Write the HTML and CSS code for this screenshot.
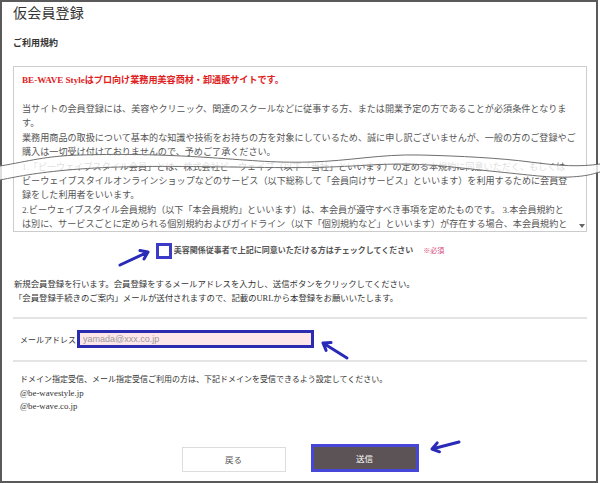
FILE: index.html
```html
<!DOCTYPE html>
<html lang="ja">
<head>
  <meta charset="UTF-8">
  <meta name="viewport" content="width=device-width, initial-scale=1.0">
  <title>仮会員登録</title>
  <link rel="stylesheet" href="styles.css">
</head>
<body>
  <div class="frame">
    <h1 class="title">仮会員登録</h1>
    <h2 class="subtitle">ご利用規約</h2>

    <div class="terms">
      <div class="terms-text">
        <p class="lead">BE-WAVE Styleはプロ向け業務用美容商材・卸通販サイトです。</p>
        <p>当サイトの会員登録には、美容やクリニック、関連のスクールなどに従事する方、または開業予定の方であることが必須条件となりま<br>す。<br>
        業務用商品の取扱について基本的な知識や技術をお持ちの方を対象にしているため、誠に申し訳ございませんが、一般の方のご登録やご<br>購入は一切受け付けておりませんので、予めご了承ください。<br>
        1.「ビーウェイブスタイル会員」とは、株式会社ビーウェイブ（以下「当社」といいます）の定める本規約に同意いただく、もしくは<br>
        ビーウェイブスタイルオンラインショップなどのサービス（以下総称して「会員向けサービス」といいます）を利用するために会員登<br>録をした利用者をいいます。<br>
        2.ビーウェイブスタイル会員規約（以下「本会員規約」といいます）は、本会員が遵守すべき事項を定めたものです。 3.本会員規約と<br>は別に、サービスごとに定められる個別規約およびガイドライン（以下「個別規約など」といいます）が存在する場合、本会員規約と</p>
      </div>
      <div class="scrollbar"><span class="scroll-down"></span></div>
    </div>

    <label class="agree">
      <input type="checkbox" class="agree-box">
      <span>美容関係従事者で上記に同意いただける方はチェックしてください</span>
      <span class="required">※必須</span>
    </label>

    <p class="notice">新規会員登録を行います。会員登録をするメールアドレスを入力し、送信ボタンをクリックしてください。<br>「会員登録手続きのご案内」メールが送付されますので、記載のURLから本登録をお願いいたします。</p>

    <div class="mail-row">
      <label for="mail" class="mail-label">メールアドレス</label>
      <input type="text" id="mail" class="mail-input" placeholder="yamada@xxx.co.jp">
    </div>

    <p class="domain">ドメイン指定受信、メール指定受信ご利用の方は、下記ドメインを受信できるよう設定してください。<br><span class="addr">@be-wavestyle.jp</span><br><span class="addr">@be-wave.co.jp</span></p>

    <div class="actions">
      <button class="btn btn-back">戻る</button>
      <button class="btn btn-send">送信</button>
    </div>
  </div>

  <!-- omitted part of the terms -->
  <svg class="wave" viewBox="0 140 600 50" width="600" height="50">
    <defs>
      <clipPath id="above-low">
        <path d="M0,180 C20,176 40,172 80,169 S160,166 230,167 S320,168 370,165 S450,167 490,171 S550,178 570,177 S595,173 600,172 L600,140 L0,140 Z"/>
      </clipPath>
    </defs>
    <path d="M0,166 C30,161 45,156 80,155 S150,154 200,157 S270,163 310,162 S380,154 420,155 S500,158 530,162 S580,167 600,164 L600,190 L0,190 Z" fill="#fff" fill-opacity="0.8" clip-path="url(#above-low)"/>
    <path d="M0,166 C30,161 45,156 80,155 S150,154 200,157 S270,163 310,162 S380,154 420,155 S500,158 530,162 S580,167 600,164" fill="none" stroke="#6f6f6f" stroke-width="1"/>
    <path d="M0,180 C20,176 40,172 80,169 S160,166 230,167 S320,168 370,165 S450,167 490,171 S550,178 570,177 S595,173 600,172" fill="none" stroke="#6f6f6f" stroke-width="1"/>
  </svg>

  <!-- annotation arrows -->
  <svg class="arrows" viewBox="0 0 600 483" width="600" height="483">
    <g fill="none" stroke="#2a2ab8" stroke-width="3" stroke-linecap="round" stroke-linejoin="round">
      <path d="M120,265 L148,252 M140,250.6 L148,252 L144,258.9"/>
      <path d="M347,358 L323,343 M326.1,350.4 L323,343 L331,342.6"/>
      <path d="M459,442 L432,449 M439.5,451.8 L432,449 L437.2,442.9"/>
    </g>
  </svg>
</body>
</html>
```

FILE: styles.css
```css
body { margin: 0; position: relative; background: #fff; color: #444; font-family: "Liberation Serif", "Noto Sans CJK JP", serif; }
p { margin: 0; }

.frame { width: 598px; height: 483px; box-sizing: border-box; border: 2px solid #5a5a5a; padding: 2px 9px 0 11px; }

.title { margin: 0; font-size: 14px; line-height: 20px; font-weight: normal; color: #333; letter-spacing: 0.2px; }
.subtitle { margin: 12px 0 0; font-size: 9px; line-height: 14px; font-weight: bold; color: #333; }

.terms { display: flex; height: 166px; margin-top: 16px; box-sizing: border-box; border: 1px solid #ccc; overflow: hidden; }
.terms-text { flex: 1; padding: 6px 0 0 8px; font-size: 9.1px; line-height: 14.4px; color: #555; white-space: nowrap; overflow: hidden; }
.terms-text .lead { margin-bottom: 15px; line-height: 14px; color: #e0201c; font-weight: bold; }
.scrollbar { width: 8px; display: flex; flex-direction: column; justify-content: flex-end; align-items: center; padding-bottom: 3px; }
.scroll-down { width: 0; height: 0; border-left: 3px solid transparent; border-right: 3px solid transparent; border-top: 4px solid #666; }

.agree { display: flex; justify-content: center; align-items: center; margin-top: 11px; font-size: 8px; line-height: 14px; font-weight: bold; color: #555; }
.agree-box { appearance: none; -webkit-appearance: none; width: 16px; height: 16px; margin: 0 2px 0 0; box-sizing: border-box; border: 3px solid #3b3bc8; background: #fff; }
.required { margin-left: 10px; font-size: 7px; font-weight: normal; color: #d6457a; }

.notice { margin: 19px 0 0 1px; font-size: 8.4px; line-height: 14px; color: #333; }

.mail-row { display: flex; align-items: center; margin-top: 11px; padding: 11px 0 12px 7px; border-top: 2px solid #e4e4e4; border-bottom: 2px solid #e4e4e4; }
.mail-label { width: 57px; font-size: 8px; color: #333; }
.mail-input { width: 237px; height: 18px; box-sizing: border-box; padding: 0 3px; border: 3px solid #2b2bb0; background: #fce6ea; font-family: "Liberation Sans", sans-serif; font-size: 9px; color: #666; outline: none; }
.mail-input::placeholder { color: #9a9a9a; }

.domain { margin-top: 11px; padding-left: 7px; font-size: 8px; line-height: 13.5px; color: #333; }
.domain .addr { font-size: 8.8px; }

.actions { display: flex; justify-content: center; align-items: flex-end; gap: 25px; margin-top: 30px; }
.btn { box-sizing: border-box; font-family: "Liberation Serif", "Noto Sans CJK JP", serif; font-size: 8.5px; cursor: pointer; }
.btn-back { width: 104px; height: 25px; background: #fff; border: 1px solid #ddd; color: #555; }
.btn-send { width: 108px; height: 28px; background: #5b5355; border: 3px solid #4646d8; color: #fff; }

.wave { position: absolute; left: 0; top: 140px; pointer-events: none; }
.arrows { position: absolute; left: 0; top: 0; pointer-events: none; }
```
